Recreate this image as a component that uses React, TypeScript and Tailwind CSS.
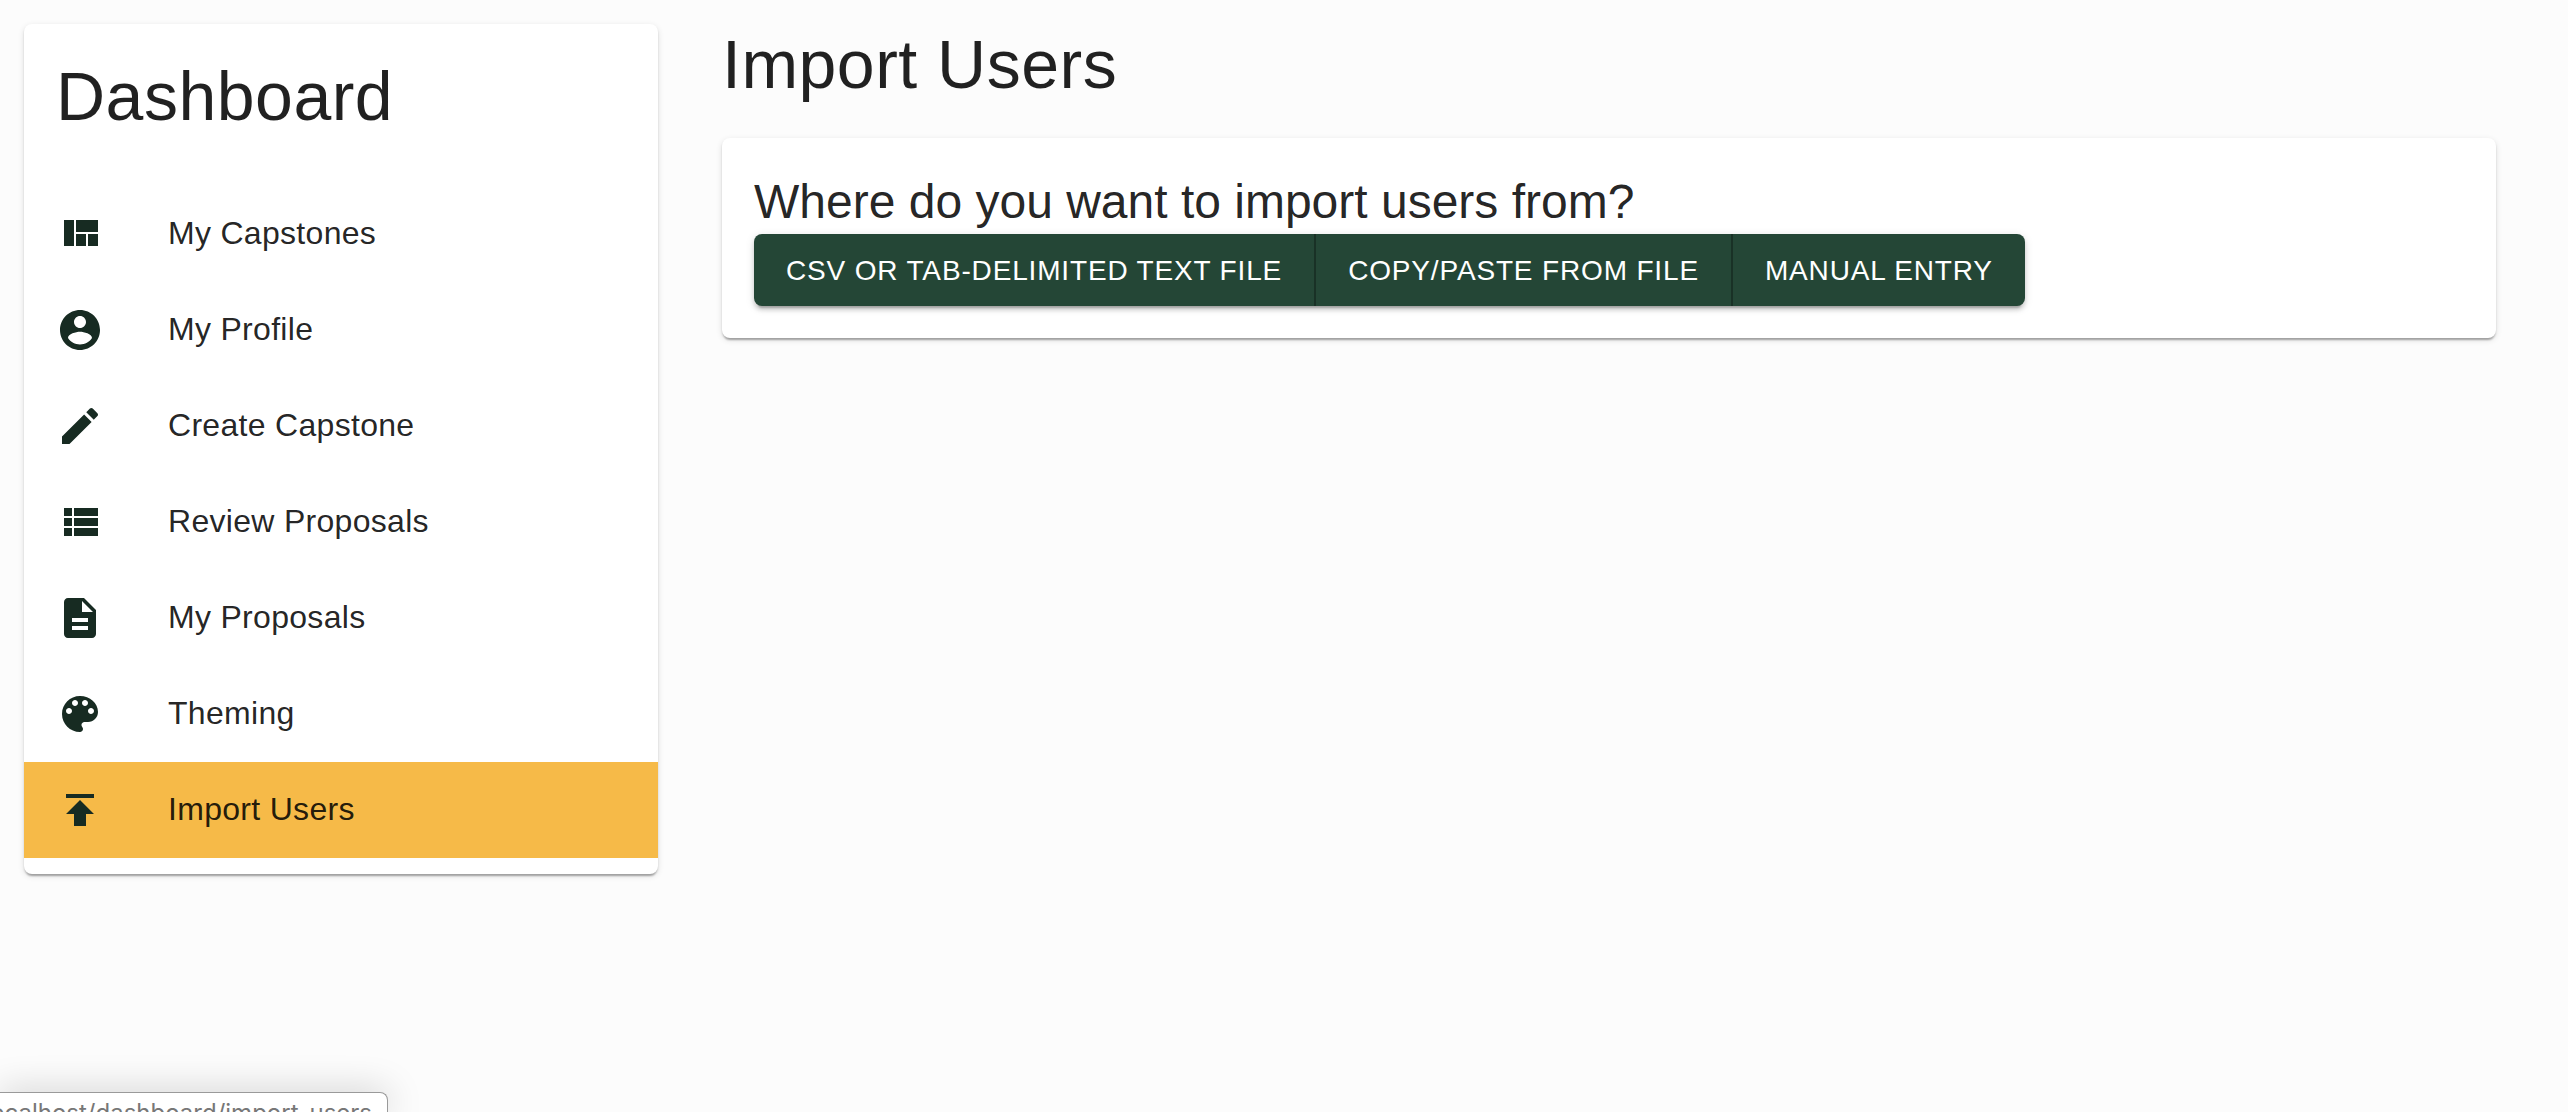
const VIEW_QUILT =
  'M10 18h5v-6h-5v6zm-6 0h5V5H4v13zm12 0h5v-6h-5v6zM10 5v6h11V5H10z';
const ACCOUNT_CIRCLE =
  'M12 2C6.48 2 2 6.48 2 12s4.48 10 10 10 10-4.48 10-10S17.52 2 12 2zm0 3c1.66 0 3 1.34 3 3s-1.34 3-3 3-3-1.34-3-3 1.34-3 3-3zm0 14.2c-2.5 0-4.71-1.28-6-3.22.03-1.99 4-3.08 6-3.08 1.99 0 5.97 1.09 6 3.08-1.29 1.94-3.5 3.22-6 3.22z';
const CREATE =
  'M3 17.25V21h3.75L17.81 9.94l-3.75-3.75L3 17.25zM20.71 7.04c.39-.39.39-1.02 0-1.41l-2.34-2.34c-.39-.39-1.02-.39-1.41 0l-1.83 1.83 3.75 3.75 1.83-1.83z';
const VIEW_LIST =
  'M4 14h4v-4H4v4zm0 5h4v-4H4v4zM4 9h4V5H4v4zm5 5h12v-4H9v4zm0 5h12v-4H9v4zM9 5v4h12V5H9z';
const DESCRIPTION =
  'M14 2H6c-1.1 0-1.99.9-1.99 2L4 20c0 1.1.89 2 1.99 2H18c1.1 0 2-.9 2-2V8l-6-6zm2 16H8v-2h8v2zm0-4H8v-2h8v2zm-3-5V3.5L18.5 9H13z';
const PALETTE =
  'M12 3c-4.97 0-9 4.03-9 9s4.03 9 9 9c.83 0 1.5-.67 1.5-1.5 0-.39-.15-.74-.39-1.01-.23-.26-.38-.61-.38-.99 0-.83.67-1.5 1.5-1.5H16c2.76 0 5-2.24 5-5 0-4.42-4.03-8-9-8zm-5.5 9c-.83 0-1.5-.67-1.5-1.5S5.67 9 6.5 9 8 9.67 8 10.5 7.33 12 6.5 12zm3-4C8.67 8 8 7.33 8 6.5S8.67 5 9.5 5s1.5.67 1.5 1.5S10.33 8 9.5 8zm5 0c-.83 0-1.5-.67-1.5-1.5S13.67 5 14.5 5s1.5.67 1.5 1.5S15.33 8 14.5 8zm3 4c-.83 0-1.5-.67-1.5-1.5S16.67 9 17.5 9s1.5.67 1.5 1.5-.67 1.5-1.5 1.5z';
const PUBLISH = 'M5 4v2h14V4H5zm0 10h4v6h6v-6h4l-7-7-7 7z';

const navItems: { label: string; icon: string; active?: boolean }[] = [
  { label: 'My Capstones', icon: VIEW_QUILT },
  { label: 'My Profile', icon: ACCOUNT_CIRCLE },
  { label: 'Create Capstone', icon: CREATE },
  { label: 'Review Proposals', icon: VIEW_LIST },
  { label: 'My Proposals', icon: DESCRIPTION },
  { label: 'Theming', icon: PALETTE },
  { label: 'Import Users', icon: PUBLISH, active: true },
];

const sources = ['CSV or tab-delimited text file', 'Copy/paste from file', 'Manual entry'];

const CARD =
  'rounded-lg bg-white shadow-[0_4px_2px_-2px_rgba(0,0,0,0.2),0_2px_2px_0_rgba(0,0,0,0.14),0_2px_6px_0_rgba(0,0,0,0.12)]';

function Sidebar() {
  return (
    <nav className={`h-[850px] w-[634px] shrink-0 ${CARD}`}>
      <h1 className="h-[146px] px-8 pt-8 text-[68px] leading-[80px] tracking-[0.00735em]">
        Dashboard
      </h1>
      <ul className="py-4">
        {navItems.map((item) => (
          <li
            key={item.label}
            className={`flex h-24 items-center px-8 ${item.active ? 'bg-[#f6ba48]' : ''}`}
          >
            <svg viewBox="0 0 24 24" className="size-12 shrink-0 fill-[#172b22]">
              <path d={item.icon} />
            </svg>
            <span className="mb-0.5 ml-16 text-[32px] leading-[48px] tracking-[0.00938em]">
              {item.label}
            </span>
          </li>
        ))}
      </ul>
    </nav>
  );
}

function ImportPanel() {
  return (
    <main className="ml-16 w-[1774px] shrink-0">
      <h1 className="h-[84px] text-[68px] leading-[80px] tracking-[0.00735em]">Import Users</h1>
      <section className={`mt-[30px] flex h-[200px] flex-col items-start p-8 ${CARD}`}>
        <h2 className="text-[48px] leading-[64px]">Where do you want to import users from?</h2>
        <div className="flex h-[72px] rounded-lg bg-[#244636] text-white shadow-[0_6px_2px_-4px_rgba(0,0,0,0.2),0_4px_4px_0_rgba(0,0,0,0.14),0_2px_10px_0_rgba(0,0,0,0.12)]">
          {sources.map((source) => (
            <button
              key={source}
              className="border-r-2 border-[#193126] px-8 text-[28px] leading-[49px] tracking-[0.03em] whitespace-nowrap uppercase last:border-r-0"
            >
              {source}
            </button>
          ))}
        </div>
      </section>
    </main>
  );
}

function StatusBubble() {
  return (
    <div className="absolute bottom-0 left-0 flex h-5 w-[388px] justify-end rounded-tr-lg border-t border-r border-[#9a9a9a] bg-white pr-[15px] shadow-[0_0_36px_rgba(0,0,0,0.22)]">
      <span className="mt-1.5 font-['Inter',sans-serif] text-2xl leading-7 whitespace-nowrap text-[#777777]">
        localhost/dashboard/import_users
      </span>
    </div>
  );
}

export default function App() {
  return (
    <div className="relative flex h-[1112px] w-[2568px] items-start overflow-hidden bg-[#fcfcfc] p-6 font-['Liberation_Sans',Arial,sans-serif] text-black/87">
      <Sidebar />
      <ImportPanel />
      <StatusBubble />
    </div>
  );
}
